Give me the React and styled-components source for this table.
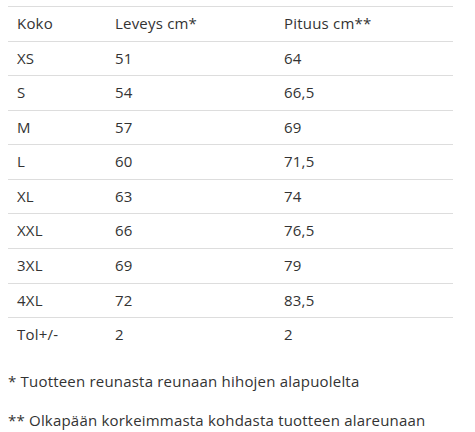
import React from 'react';
import styled, { createGlobalStyle } from 'styled-components';

const GlobalStyle = createGlobalStyle`
  html, body {
    margin: 0;
    padding: 0;
    background: #ffffff;
  }
  body {
    font-family: 'Open Sans', 'Noto Sans', sans-serif;
    font-size: 15px;
    letter-spacing: 0.2px;
    color: #333333;
  }
`;

const Wrapper = styled.div`
  width: 445px;
  padding: 6px 0 0 8px;
`;

const Table = styled.table`
  width: 445px;
  border-collapse: collapse;
  table-layout: fixed;
`;

const Cell = styled.td`
  box-sizing: border-box;
  width: ${(p) => p.$width}px;
  border-top: 1px solid #dddddd;
  padding: 7px 9px;
  line-height: 19.56px;
  text-align: left;
  font-weight: 400;
  vertical-align: middle;
`;

const Notes = styled.div`
  padding-top: 19px;
`;

const Note = styled.p`
  margin: 0 0 19px;
  line-height: 20px;
`;

const widths = [98, 169, 178];

const rows = [
  ['Koko', 'Leveys cm*', 'Pituus cm**'],
  ['XS', '51', '64'],
  ['S', '54', '66,5'],
  ['M', '57', '69'],
  ['L', '60', '71,5'],
  ['XL', '63', '74'],
  ['XXL', '66', '76,5'],
  ['3XL', '69', '79'],
  ['4XL', '72', '83,5'],
  ['Tol+/-', '2', '2'],
];

export default function App() {
  return (
    <>
      <GlobalStyle />
      <Wrapper>
        <Table>
          <tbody>
            {rows.map((row, i) => (
              <tr key={i}>
                {row.map((val, j) => (
                  <Cell key={j} $width={widths[j]}>
                    {val}
                  </Cell>
                ))}
              </tr>
            ))}
          </tbody>
        </Table>
        <Notes>
          <Note>* Tuotteen reunasta reunaan hihojen alapuolelta</Note>
          <Note>** Olkapään korkeimmasta kohdasta tuotteen alareunaan</Note>
        </Notes>
      </Wrapper>
    </>
  );
}
